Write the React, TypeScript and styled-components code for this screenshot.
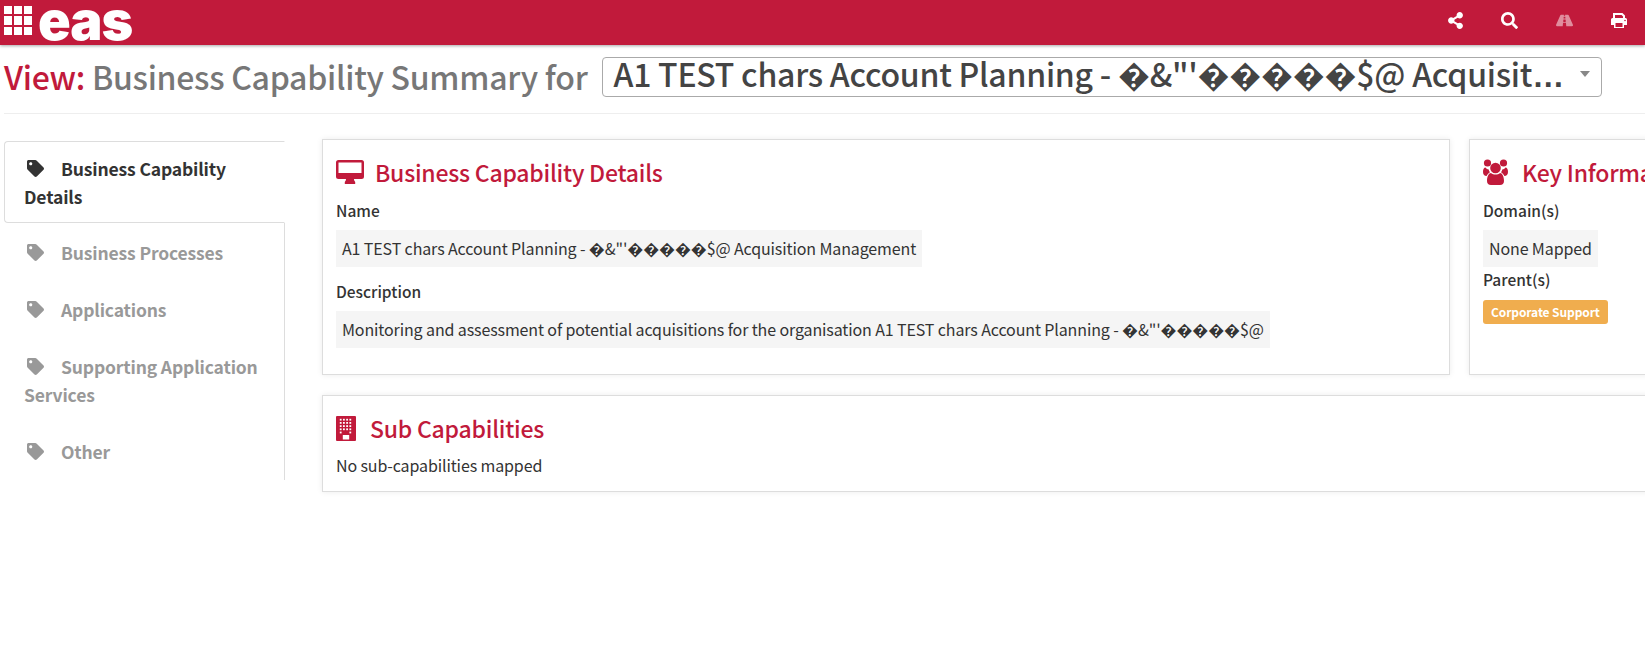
import React from "react";
import styled, { createGlobalStyle } from "styled-components";
import { FaTag, FaShareAlt, FaSearch, FaRoad } from "react-icons/fa";

const Global = createGlobalStyle`
  html, body { margin: 0; padding: 0; background: #fff; }
  body { font-family: "Noto Sans CJK SC", "Noto Sans", sans-serif; color: #333; }
  * { box-sizing: border-box; }
`;

const Page = styled.div`
  width: 100%;
  height: 100vh;
  overflow: hidden;
`;

const TopBar = styled.header`
  height: 45px;
  background: #c11a3b;
  box-shadow: 0 1px 3px rgba(0, 0, 0, 0.35);
  display: flex;
  align-items: center;
  justify-content: space-between;
  padding: 0 17px 4px 4px;
`;

const Logo = styled.div`
  display: flex;
  align-items: center;
  gap: 6px;
`;

const LogoGrid = styled.div`
  display: grid;
  grid-template-columns: repeat(3, 8px);
  grid-template-rows: repeat(3, 8.5px);
  gap: 2px;
`;

const LogoCell = styled.span`
  background: #fff;
`;

const LogoText = styled.span`
  font-family: "Inter", sans-serif;
  font-weight: 900;
  font-size: 54px;
  line-height: 41px;
  letter-spacing: -1px;
  color: #fff;
`;

const TopIcons = styled.nav`
  display: flex;
  align-items: center;
  gap: 37.5px;
`;

const TopIcon = styled.span<{ $dim?: boolean }>`
  display: flex;
  color: #fff;
  opacity: ${(p) => (p.$dim ? 0.5 : 1)};
  font-size: 17px;
`;

const TitleRow = styled.div`
  margin: 12px 0 0 4px;
  height: 57px;
  border-bottom: 1px solid #eee;
  display: flex;
  align-items: flex-start;
  gap: 15px;
`;

const Title = styled.h1`
  margin: 0;
  font-size: 32px;
  line-height: 38px;
  font-weight: 500;
  letter-spacing: -0.28px;
  color: #777;
  white-space: nowrap;
`;

const TitleAccent = styled.span`
  color: #c11a3b;
`;

const SelectBox = styled.div`
  width: 1000px;
  height: 40px;
  border: 1px solid #aaa;
  border-radius: 4px;
  display: flex;
  align-items: center;
  padding: 0 10px 5px;
  gap: 10px;
`;

const SelectText = styled.span`
  flex: 1;
  min-width: 0;
  font-size: 32px;
  font-weight: 500;
  line-height: 38px;
  letter-spacing: -0.25px;
  color: #444;
  white-space: nowrap;
`;

const Dots = styled.span`
  font-family: "Liberation Sans", sans-serif;
  font-weight: 700;
  letter-spacing: -0.5px;
`;

const Caret = styled.span`
  width: 0;
  height: 0;
  border-left: 5px solid transparent;
  border-right: 5px solid transparent;
  border-top: 6px solid #888;
  margin: -1px 1px 0 0;
`;

const Main = styled.main`
  display: flex;
  align-items: flex-start;
  padding: 25px 0 0 4px;
  width: 2000px;
`;

const Side = styled.ul`
  list-style: none;
  margin: 2px 0 0;
  padding: 0;
  width: 281px;
  flex: none;
  border-right: 1px solid #ddd;
`;

const Tab = styled.li<{ $active?: boolean }>`
  font-size: 17.5px;
  font-weight: 700;
  letter-spacing: -0.15px;
  line-height: 28px;
  padding: ${(p) => (p.$active ? "13px 20px 11px 19px" : "14.5px 20px")};
  color: ${(p) => (p.$active ? "#333" : "#999")};
  ${(p) =>
    p.$active
      ? `border: 1px solid #ddd; border-right: 1px solid #fff; border-radius: 4px 0 0 4px; margin: 0 -1px 1px 0; background: #fff;`
      : ""}
  svg {
    font-size: 17px;
    vertical-align: -1px;
    margin: 0 17px 0 3px;
  }
`;

const Content = styled.div`
  margin-left: 37px;
  flex: 1;
  display: flex;
  flex-direction: column;
  gap: 20px;
`;

const CardRow = styled.div`
  display: flex;
  gap: 19px;
`;

const Card = styled.section<{ $w?: number }>`
  flex: ${(p) => (p.$w ? `0 0 ${p.$w}px` : "1")};
  border: 1px solid #ddd;
  box-shadow: 0 0 6px rgba(0, 0, 0, 0.08);
  padding: 14px 13px 14px;
  background: #fff;
`;

const CardTitle = styled.h2<{ $gap: number }>`
  margin: 0 0 8px;
  font-size: 23px;
  font-weight: 500;
  letter-spacing: -0.23px;
  line-height: 36px;
  color: #c11a3b;
  display: flex;
  align-items: center;
  gap: ${(p) => p.$gap}px;
  white-space: nowrap;
`;

const Label = styled.div`
  font-size: 15.5px;
  font-weight: 500;
  line-height: 25px;
  color: #333;
`;

const Value = styled.div`
  display: table;
  background: #f5f5f5;
  font-size: 16px;
  letter-spacing: -0.12px;
  line-height: 24px;
  padding: 6px;
  margin: 7px 0 12px;
  height: 37px;
  color: #333;
`;

const TightValue = styled(Value)`
  margin-bottom: 0;
`;

const Badge = styled.span`
  display: inline-block;
  background: #f0ad4e;
  color: #fff;
  font-size: 12px;
  font-weight: 700;
  letter-spacing: -0.1px;
  line-height: 24px;
  height: 24px;
  padding: 0 8px;
  border-radius: 3px;
  margin-top: 8px;
`;

const Plain = styled.div`
  font-size: 16px;
  letter-spacing: -0.12px;
  line-height: 23px;
  color: #333;
`;

const ACCENT = "#c11a3b";

const PrintIcon = () => (
  <svg width="18" height="16" viewBox="0 0 18 16" fill="none">
    <path d="M4 5V1h8l2 2v2" stroke="#fff" strokeWidth="2" />
    <path d="M1 6.500a1.500 1.500 0 0 1 1.500-1.500h13A1.500 1.500 0 0 1 17 6.500V12h-3v3H4v-3H1z" fill="#fff" />
    <rect x="5.500" y="10" width="7" height="4" fill="#c11a3b" />
    <circle cx="15" cy="7.500" r="0.800" fill="#c11a3b" />
  </svg>
);

const DesktopIcon = () => (
  <svg width="28" height="24" viewBox="0 0 28 24">
    <path
      fillRule="evenodd"
      fill={ACCENT}
      d="M2.500 0h23A2.500 2.500 0 0 1 28 2.500v14a2.500 2.500 0 0 1-2.500 2.500H18c0 1.500.6 2 1.200 3v2H8.800v-2c.6-1 1.200-1.500 1.200-3H2.500A2.500 2.500 0 0 1 0 16.500v-14A2.500 2.500 0 0 1 2.500 0zM2.500 2.500v10.500h23V2.500z"
    />
  </svg>
);

const UsersIcon = () => (
  <svg width="25" height="26" viewBox="0 0 25 26" fill={ACCENT}>
    <circle cx="4.500" cy="4" r="3.600" />
    <circle cx="20.500" cy="4" r="3.600" />
    <circle cx="12.500" cy="9" r="5.300" />
    <path d="M4 22c0-5 2-8 4-8 1.200 1 2.800 1.500 4.500 1.500S16 15 17 14c2 0 4 3 4 8 0 2.500-1.500 4-4 4H8c-2.500 0-4-1.500-4-4z" />
    <path d="M0 13c0-3 1-4.500 2.500-4.500.8 1.200 2 2 3.200 2 .2 1 .6 2 1.300 2.700C5.500 14 4.200 15.500 3.600 17 1.500 17 0 15.500 0 13z" />
    <path d="M25 13c0-3-1-4.500-2.500-4.500-.8 1.200-2 2-3.200 2-.2 1-.6 2-1.300 2.700 1.500.8 2.800 2.300 3.400 3.800 2.100 0 3.600-1.500 3.600-4z" />
  </svg>
);

const BuildingIcon = () => {
  const cells: React.ReactNode[] = [];
  for (let r = 0; r < 5; r++) {
    for (let c = 0; c < 4; c++) {
      if (r === 4 && (c === 1 || c === 2)) continue;
      cells.push(
        <rect key={`${r}-${c}`} x={3.800 + c * 3.200} y={2.800 + r * 3.200} width="1.800" height="1.800" fill="#fff" />
      );
    }
  }
  return (
    <svg width="20" height="25" viewBox="0 0 20 25">
      <rect width="20" height="25" rx="1" fill={ACCENT} />
      {cells}
      <rect x="6.800" y="19" width="6.400" height="4.500" fill="#fff" />
    </svg>
  );
};

const NAME = "A1 TEST chars Account Planning - \uFFFD&\"'\uFFFD\uFFFD\uFFFD\uFFFD\uFFFD$@ Acquisition Management";
const DESC =
  "Monitoring and assessment of potential acquisitions for the organisation A1 TEST chars Account Planning - \uFFFD&\"'\uFFFD\uFFFD\uFFFD\uFFFD\uFFFD$@";
const SELECTED = "A1 TEST chars Account Planning - \uFFFD&\"'\uFFFD\uFFFD\uFFFD\uFFFD\uFFFD$@ Acquisit";

const TABS = ["Business Capability Details", "Business Processes", "Applications", "Supporting Application Services", "Other"];

export default function App() {
  return (
    <Page>
      <Global />
      <TopBar>
        <Logo>
          <LogoGrid>
            {Array.from({ length: 9 }).map((_, i) => (
              <LogoCell key={i} />
            ))}
          </LogoGrid>
          <LogoText>eas</LogoText>
        </Logo>
        <TopIcons>
          <TopIcon><FaShareAlt /></TopIcon>
          <TopIcon><FaSearch /></TopIcon>
          <TopIcon $dim><FaRoad /></TopIcon>
          <TopIcon><PrintIcon /></TopIcon>
        </TopIcons>
      </TopBar>
      <TitleRow>
        <Title>
          <TitleAccent>View:</TitleAccent> Business Capability Summary for
        </Title>
        <SelectBox>
          <SelectText>
            {SELECTED}
            <Dots>{"\u2026"}</Dots>
          </SelectText>
          <Caret />
        </SelectBox>
      </TitleRow>
      <Main>
        <Side>
          {TABS.map((t, i) => (
            <Tab key={t} $active={i === 0}>
              <FaTag />
              {t}
            </Tab>
          ))}
        </Side>
        <Content>
          <CardRow>
            <Card $w={1128}>
              <CardTitle $gap={11}><DesktopIcon />Business Capability Details</CardTitle>
              <Label>Name</Label>
              <Value>{NAME}</Value>
              <Label>Description</Label>
              <Value>{DESC}</Value>
            </Card>
            <Card $w={400}>
              <CardTitle $gap={14}><UsersIcon />Key Information</CardTitle>
              <Label>Domain(s)</Label>
              <TightValue>None Mapped</TightValue>
              <Label>Parent(s)</Label>
              <Badge>Corporate Support</Badge>
            </Card>
          </CardRow>
          <Card>
            <CardTitle $gap={14}><BuildingIcon />Sub Capabilities</CardTitle>
            <Plain>No sub-capabilities mapped</Plain>
          </Card>
        </Content>
      </Main>
    </Page>
  );
}
